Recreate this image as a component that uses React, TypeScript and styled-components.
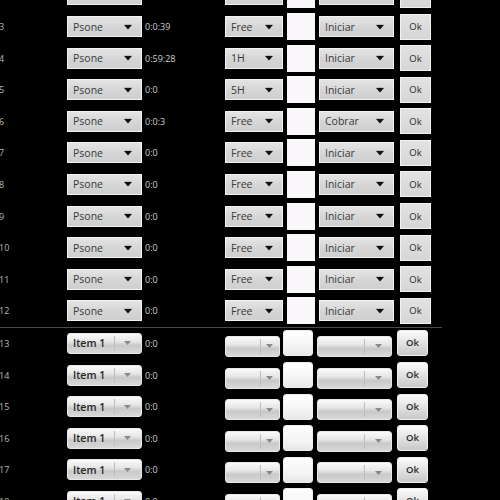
import React from "react";
import styled, { createGlobalStyle, css } from "styled-components";

const GlobalStyle = createGlobalStyle`
	html, body {
		margin: 0;
		padding: 0;
		background: #000;
		overflow: hidden;
	}
	body {
		font-family: "Open Sans", "Noto Sans", sans-serif;
	}
`;

const Screen = styled.div`
	width: 500px;
	height: 500px;
	background: #000;
	overflow: hidden;
`;

const List = styled.div`
	display: flex;
	flex-direction: column;
	margin-top: -20.9px;
`;

const Row = styled.div`
	display: flex;
	align-items: center;
	height: 31.6px;
	flex-shrink: 0;
`;

const Divider = styled.div`
	width: 442px;
	height: 1px;
	background: #4a4a4a;
	flex-shrink: 0;
`;

const Num = styled.div`
	width: 68px;
	margin-left: -1px;
	font-size: 9px;
	color: #b8b8b8;
	flex-shrink: 0;
`;

const Time = styled.div`
	width: 83px;
	box-sizing: border-box;
	padding-left: 3px;
	font-size: 9px;
	color: #cfcfcf;
	flex-shrink: 0;
`;

const OldSpinner = styled.div<{ $w: number }>`
	position: relative;
	width: ${(p) => p.$w}px;
	height: 21px;
	box-sizing: border-box;
	border: 1px solid #f2f2f2;
	background: linear-gradient(#e4e4e4, #d4d4d4 60%, #cfcfcf);
	display: flex;
	align-items: center;
	padding-left: 5px;
	font-size: 10.5px;
	color: #3a3a3a;
	flex-shrink: 0;
`;

const NewSpinner = styled.div<{ $w: number; $low?: boolean }>`
	position: relative;
	width: ${(p) => p.$w}px;
	height: 21px;
	box-sizing: border-box;
	border-radius: 3px;
	border: 1px solid #e8e8e8;
	background: linear-gradient(#fafafa, #e6e6e6 40%, #c9c9c9 60%, #d8d8d8);
	display: flex;
	align-items: center;
	padding-left: 5px;
	font-size: 10.5px;
	font-weight: 600;
	color: #262626;
	flex-shrink: 0;
	${(p) =>
		p.$low &&
		css`
			margin-top: 6px;
		`}
`;

const Caret = styled.svg<{ $right: number }>`
	position: absolute;
	right: ${(p) => p.$right}px;
	top: 50%;
	transform: translateY(-50%);
`;

const Seam = styled.div<{ $right: number }>`
	position: absolute;
	right: ${(p) => p.$right}px;
	top: 2px;
	bottom: 2px;
	width: 1px;
	background: #bdbdbd;
`;

const Square = styled.div<{ $w: number; $round?: boolean }>`
	width: ${(p) => p.$w}px;
	height: 27px;
	box-sizing: border-box;
	flex-shrink: 0;
	${(p) =>
		p.$round
			? css`
					height: 26px;
					border-radius: 3px;
					background: linear-gradient(#ffffff, #f2f2f2 70%, #e6e6e6);
					border: 1px solid #eeeeee;
				`
			: css`
					background: #faf8fa;
				`}
`;

const OkButton = styled.div<{ $round?: boolean }>`
	width: 31px;
	height: 26px;
	box-sizing: border-box;
	display: flex;
	justify-content: center;
	font-size: 9.5px;
	color: #2a2a2a;
	flex-shrink: 0;
	${(p) =>
		p.$round
			? css`
					align-items: flex-start;
					padding-top: 5px;
					border-radius: 3px;
					border: 1px solid #f0f0f0;
					background: linear-gradient(#fbfbfb, #e2e2e2 50%, #c9c9c9);
					font-weight: 600;
				`
			: css`
					align-items: center;
					border: 1px solid #f2f2f2;
					background: linear-gradient(#e2e2e2, #d6d6d6);
				`}
`;

const Gap = styled.div<{ $w: number }>`
	width: ${(p) => p.$w}px;
	flex-shrink: 0;
`;

function BlackCaret({ right }: { right: number }) {
	return (
		<Caret $right={right} width="8" height="5" viewBox="0 0 8 5">
			<path d="M0.5 0.5 L7.5 0.5 L4 4.8 Z" fill="#111" stroke="#111" strokeWidth="0.6" strokeLinejoin="round" />
		</Caret>
	);
}

function GreyCaret({ right }: { right: number }) {
	return (
		<Caret $right={right} width="7" height="4" viewBox="0 0 7 4">
			<path d="M0 0 L7 0 L3.5 4 Z" fill="#8a8a8a" />
		</Caret>
	);
}

type Slot = { n: number; game: string; time: string; plan: string; action: string };

const slots: Slot[] = [
	{ n: 2, game: "Psone", time: "0:0", plan: "Free", action: "Iniciar" },
	{ n: 3, game: "Psone", time: "0:0:39", plan: "Free", action: "Iniciar" },
	{ n: 4, game: "Psone", time: "0:59:28", plan: "1H", action: "Iniciar" },
	{ n: 5, game: "Psone", time: "0:0", plan: "5H", action: "Iniciar" },
	{ n: 6, game: "Psone", time: "0:0:3", plan: "Free", action: "Cobrar" },
	{ n: 7, game: "Psone", time: "0:0", plan: "Free", action: "Iniciar" },
	{ n: 8, game: "Psone", time: "0:0", plan: "Free", action: "Iniciar" },
	{ n: 9, game: "Psone", time: "0:0", plan: "Free", action: "Iniciar" },
	{ n: 10, game: "Psone", time: "0:0", plan: "Free", action: "Iniciar" },
	{ n: 11, game: "Psone", time: "0:0", plan: "Free", action: "Iniciar" },
	{ n: 12, game: "Psone", time: "0:0", plan: "Free", action: "Iniciar" },
];

const empties = [13, 14, 15, 16, 17, 18];

function App() {
	return (
		<Screen>
			<GlobalStyle />
			<List>
				{slots.map((s) => (
					<Row key={s.n}>
						<Num>{s.n}</Num>
						<OldSpinner $w={75}>
							{s.game}
							<BlackCaret right={9} />
						</OldSpinner>
						<Time>{s.time}</Time>
						<OldSpinner $w={58}>
							{s.plan}
							<BlackCaret right={9} />
						</OldSpinner>
						<Gap $w={4} />
						<Square $w={28} />
						<Gap $w={4} />
						<OldSpinner $w={75}>
							{s.action}
							<BlackCaret right={9} />
						</OldSpinner>
						<Gap $w={6} />
						<OkButton>Ok</OkButton>
					</Row>
				))}
				<Divider />
				{empties.map((n) => (
					<Row key={n}>
						<Num>{n}</Num>
						<NewSpinner $w={75}>
							Item 1
							<Seam $right={26} />
							<GreyCaret right={10} />
						</NewSpinner>
						<Time>0:0</Time>
						<NewSpinner $w={55} $low>
							<Seam $right={18} />
							<GreyCaret right={6} />
						</NewSpinner>
						<Gap $w={3} />
						<Square $w={30} $round />
						<Gap $w={4} />
						<NewSpinner $w={75} $low>
							<Seam $right={26} />
							<GreyCaret right={9} />
						</NewSpinner>
						<Gap $w={5} />
						<OkButton $round>Ok</OkButton>
					</Row>
				))}
			</List>
		</Screen>
	);
}

export default App;
